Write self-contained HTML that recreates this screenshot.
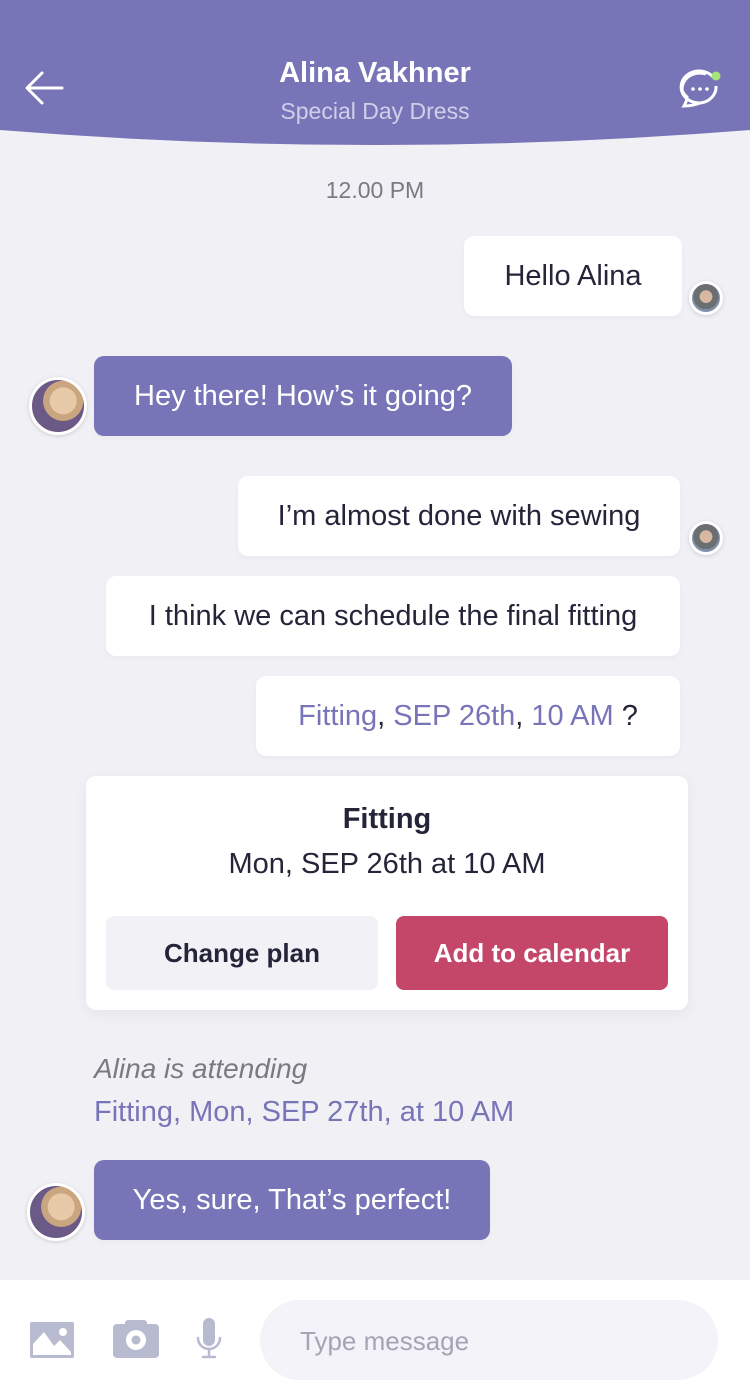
<!DOCTYPE html>
<html><head><meta charset="utf-8"><style>
*{margin:0;padding:0;box-sizing:border-box}
body{width:750px;height:1400px;background:#f0f0f5;font-family:"Liberation Sans",sans-serif;position:relative;overflow:hidden;color:#25253a}
.a{position:absolute}
.b{position:absolute;border-radius:10px;display:flex;align-items:center;justify-content:center;font-size:29px;box-shadow:0 2px 6px rgba(0,0,0,.03)}
.w{background:#fff;color:#25253a}
.p{background:#7775b8;color:#fff}
.av{position:absolute;border-radius:50%;border:3px solid #fff;background:radial-gradient(circle at 60% 40%,#e8c9a8 0 30%,#c9a680 31% 45%,#6b5a86 46%);box-shadow:0 1px 4px rgba(0,0,0,.15)}
.sv{position:absolute;border-radius:50%;border:3px solid #fff;background:radial-gradient(circle at 50% 45%,#d8b8a0 0 30%,#6b6f72 31% 60%,#8090a8 61%);box-shadow:0 1px 4px rgba(0,0,0,.15)}
.pl{color:#7775b8}
</style></head><body>
<svg class="a" style="left:0;top:0" width="750" height="150"><path d="M0 0H750V130Q375 160 0 130Z" fill="#7775b8"/></svg>
<svg class="a" style="top:70px;left:24px" width="42" height="36"><path d="M38 18H4M18 3L3 18L18 33" stroke="#fff" stroke-width="3" fill="none" stroke-linecap="round" stroke-linejoin="round"/></svg>
<div class="a" style="left:0;width:750px;top:57px;text-align:center;color:#fff;font-weight:bold;font-size:29px">Alina Vakhner</div>
<div class="a" style="left:0;width:750px;top:98px;text-align:center;color:#d0cfe8;font-size:23px">Special Day Dress</div>
<svg class="a" style="left:678px;top:68px" width="46" height="42"><path d="M36 10A18 16 0 1 0 22 35Q14 38 6 38Q9 33 9 29A18 16 0 0 1 4 22" stroke="#fff" stroke-width="3" fill="none" stroke-linecap="round"/><path d="M4 22A18 16 0 0 1 28 6" stroke="#fff" stroke-width="3" fill="none"/><path d="M38 18A18 16 0 0 1 22 35" stroke="#fff" stroke-width="3" fill="none"/><circle cx="15" cy="21" r="1.8" fill="#fff"/><circle cx="22" cy="21" r="1.8" fill="#fff"/><circle cx="29" cy="21" r="1.8" fill="#fff"/><circle cx="38" cy="8" r="4.5" fill="#a6e57a"/></svg>
<div class="a" style="left:0;width:750px;top:177px;text-align:center;color:#7a7a85;font-size:23px">12.00 PM</div>
<div class="b w" style="left:464px;top:236px;width:218px;height:80px">Hello Alina</div>
<div class="sv" style="left:689px;top:281px;width:34px;height:34px"></div>
<div class="b p" style="left:94px;top:356px;width:418px;height:80px">Hey there! How’s it going?</div>
<div class="av" style="left:29px;top:377px;width:58px;height:58px"></div>
<div class="b w" style="left:238px;top:476px;width:442px;height:80px">I’m almost done with sewing</div>
<div class="sv" style="left:689px;top:521px;width:34px;height:34px"></div>
<div class="b w" style="left:106px;top:576px;width:574px;height:80px">I think we can schedule the final fitting</div>
<div class="b w" style="left:256px;top:676px;width:424px;height:80px"><span><span class="pl">Fitting</span>, <span class="pl">SEP 26th</span>, <span class="pl">10 AM</span> ?</span></div>
<div class="a" style="left:86px;top:776px;width:602px;height:234px;background:#fff;border-radius:10px;box-shadow:0 4px 14px rgba(0,0,0,.05)">
<div class="a" style="left:0;width:602px;top:27px;text-align:center;font-weight:bold;font-size:29px">Fitting</div>
<div class="a" style="left:0;width:602px;top:72px;text-align:center;font-size:29px">Mon, SEP 26th at 10 AM</div>
<div class="a" style="left:20px;top:140px;width:272px;height:74px;background:#f1f1f6;border-radius:8px;display:flex;align-items:center;justify-content:center;font-weight:bold;font-size:26px">Change plan</div>
<div class="a" style="left:310px;top:140px;width:272px;height:74px;background:#c4476a;border-radius:8px;display:flex;align-items:center;justify-content:center;font-weight:bold;font-size:26px;color:#fff">Add to calendar</div>
</div>
<div class="a" style="left:94px;top:1053px;font-style:italic;color:#7a7a85;font-size:28px">Alina is attending</div>
<div class="a pl" style="left:94px;top:1096px;font-size:29px">Fitting, Mon, SEP 27th, at 10 AM</div>
<div class="b p" style="left:94px;top:1160px;width:396px;height:80px">Yes, sure, That’s perfect!</div>
<div class="av" style="left:27px;top:1183px;width:58px;height:58px"></div>
<div class="a" style="left:0;top:1280px;width:750px;height:120px;background:#fff"></div>
<svg class="a" style="left:30px;top:1322px" width="44" height="36"><rect x="0" y="0" width="44" height="36" rx="2" fill="#b8bad0"/><path d="M3 33L3 22L14 10L24 24L30 18L41 30V33Z" fill="#fff"/><circle cx="33" cy="10" r="4" fill="#fff"/></svg>
<svg class="a" style="left:113px;top:1320px" width="46" height="38"><rect x="0" y="4" width="46" height="34" rx="4" fill="#b8bad0"/><rect x="12" y="0" width="22" height="8" rx="3" fill="#b8bad0"/><circle cx="23" cy="20" r="10" fill="#fff"/><circle cx="23" cy="20" r="4.5" fill="#b8bad0"/></svg>
<svg class="a" style="left:196px;top:1318px" width="26" height="42"><rect x="7" y="0" width="12" height="28" rx="6" fill="#b8bad0"/><path d="M2 20A11 11 0 0 0 24 20M13 31V38M7 39H19" stroke="#b8bad0" stroke-width="2.5" fill="none" stroke-linecap="round"/></svg>
<div class="a" style="left:260px;top:1300px;width:458px;height:80px;background:#f3f3f9;border-radius:40px;color:#a4a4b4;font-size:26px;padding:26px 0 0 40px">Type message</div>
</body></html>
